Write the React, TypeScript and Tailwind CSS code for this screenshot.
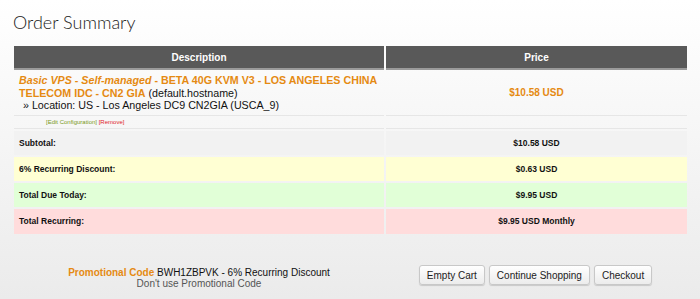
import React from "react";

const font = { fontFamily: '"Liberation Sans", Arial, sans-serif' };

export default function App() {
  return (
    <div
      className="w-[700px] h-[299px] overflow-hidden bg-gradient-to-b from-[#ffffff] to-[#ebebeb] text-[#111]"
      style={font}
    >
      <div className="pl-[13px] pt-[10px] h-[46px]">
        <h1
          className="text-[18px] leading-[24px] font-light text-[#222]"
          style={{ fontFamily: 'Lato, "Open Sans", sans-serif' }}
        >
          Order Summary
        </h1>
      </div>
      <div className="ml-[14px] w-[673px] grid grid-cols-[370px_301px] gap-x-[2px]">
        <div className="h-[24px] bg-[#595959] border-b-2 border-[#9a9a9a] flex items-center justify-center text-white text-[10px] font-bold">
          Description
        </div>
        <div className="h-[24px] bg-[#595959] border-b-2 border-[#9a9a9a] flex items-center justify-center text-white text-[10px] font-bold">
          Price
        </div>

        <div className="h-[46px] pl-[5px] pt-[4px] text-[10.7px] leading-[12.5px] border-b border-[#e6e6e6]">
          <div>
            <span className="text-[#e58a12] font-bold">
              <i>Basic VPS - Self-managed</i> - BETA 40G KVM V3 - LOS ANGELES CHINA TELECOM IDC - CN2 GIA
            </span>{" "}
            <span className="text-[#111]">(default.hostname)</span>
          </div>
          <div className="pl-[4px]">» Location: US - Los Angeles DC9 CN2GIA (USCA_9)</div>
        </div>
        <div className="h-[46px] flex items-center justify-center text-[10px] font-bold text-[#e58a12] border-b border-[#e6e6e6]">
          $10.58 USD
        </div>

        <div className="h-[13px] pl-[32px] text-[6px] leading-[13px] border-b border-[#e6e6e6]">
          <span className="text-[#7a9a1a]">[Edit Configuration]</span>{" "}
          <span className="text-[#e0222a]">[Remove]</span>
        </div>
        <div className="h-[13px] border-b border-[#e6e6e6]"></div>

        <div className="mt-[2px] h-[24px] bg-[#f2f2f2] flex items-center pl-[5px] text-[8.5px] font-bold">Subtotal:</div>
        <div className="mt-[2px] h-[24px] bg-[#f2f2f2] flex items-center justify-center text-[8.5px] font-bold">$10.58 USD</div>

        <div className="mt-[2px] h-[24px] bg-[#ffffd3] flex items-center pl-[5px] text-[8.5px] font-bold">6% Recurring Discount:</div>
        <div className="mt-[2px] h-[24px] bg-[#ffffd3] flex items-center justify-center text-[8.5px] font-bold">$0.63 USD</div>

        <div className="mt-[2px] h-[24px] bg-[#e1ffd7] flex items-center pl-[5px] text-[8.5px] font-bold">Total Due Today:</div>
        <div className="mt-[2px] h-[24px] bg-[#e1ffd7] flex items-center justify-center text-[8.5px] font-bold">$9.95 USD</div>

        <div className="mt-[2px] h-[25px] bg-[#ffdcdc] flex items-center pl-[5px] text-[8.5px] font-bold">Total Recurring:</div>
        <div className="mt-[2px] h-[25px] bg-[#ffdcdc] flex items-center justify-center text-[8.5px] font-bold">$9.95 USD Monthly</div>
      </div>

      <div className="ml-[14px] w-[673px] grid grid-cols-[370px_303px] mt-[32px]">
        <div className="flex flex-col items-center text-[10px] leading-[11px] pt-[1px]">
          <div>
            <span className="text-[#e58a12] font-bold">Promotional Code</span>{" "}
            <span className="text-[#111]">BWH1ZBPVK - 6% Recurring Discount</span>
          </div>
          <div className="text-[#555]">Don't use Promotional Code</div>
        </div>
        <div className="flex justify-center gap-[4px] -mt-[1px]">
          {["Empty Cart", "Continue Shopping", "Checkout"].map((t) => (
            <button
              key={t}
              className="h-[20px] px-[7px] rounded-[3px] border border-[#c8c8c8] bg-gradient-to-b from-[#ffffff] to-[#ececec] shadow-[0_1px_1px_rgba(0,0,0,0.15)] text-[10px] text-[#222]"
            >
              {t}
            </button>
          ))}
        </div>
      </div>
    </div>
  );
}
